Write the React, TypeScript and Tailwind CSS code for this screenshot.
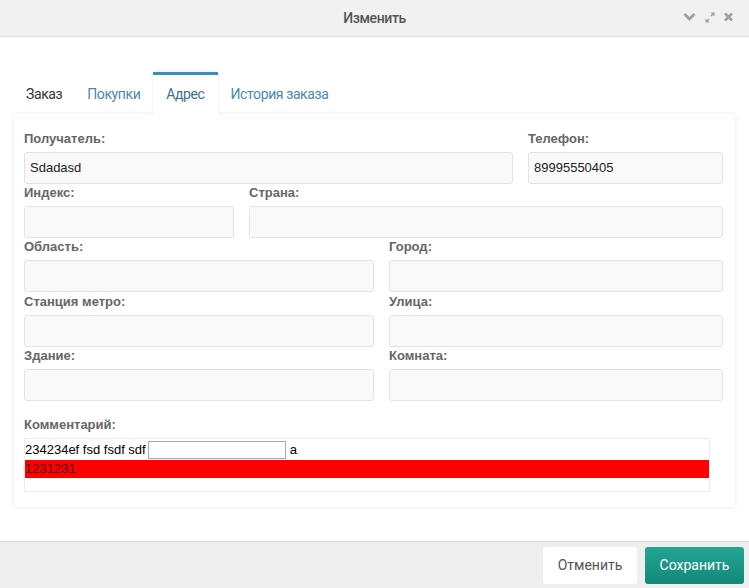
import React from 'react';

const cond = { fontFamily: '"Roboto", "Liberation Sans", sans-serif' };

interface FieldProps {
  label: string;
  value?: string;
  className?: string;
}

const Field: React.FC<FieldProps> = ({ label, value, className }) => (
  <div className={className}>
    <div className="h-[18px] mb-[4px] text-[13px] leading-[18px] font-bold text-[#666]">{label}</div>
    <div className="h-[32px] rounded-[3px] border border-[#e3e3e3] bg-[#f9f9f9] px-[5px] text-[13px] leading-[30px] text-[#222]">
      {value}
    </div>
  </div>
);

const tabs = ['Заказ', 'Покупки', 'Адрес', 'История заказа'];

export default function App() {
  return (
    <div className="w-[749px] h-[588px] flex flex-col bg-white overflow-hidden" style={{ fontFamily: '"Liberation Sans", Arial, sans-serif' }}>
      {/* header */}
      <div className="h-[37px] shrink-0 relative flex items-center justify-center bg-[#f1f1f1] border-b border-[#dcdcdc]">
        <span className="text-[14px] font-medium text-[#555] tracking-[-0.4px]" style={cond}>Изменить</span>
        <div className="absolute right-[16px] top-0 h-full flex items-center gap-[9px] text-[#a0a0a0] pb-[2px]">
          <svg width="13" height="10" viewBox="0 0 13 10">
            <path d="M1.5 2 L6.5 7 L11.5 2" fill="none" stroke="currentColor" strokeWidth="2.8" />
          </svg>
          <svg width="10" height="11" viewBox="0 0 10 11">
            <path d="M5.5 0.5 H9.5 V4.5 Z M0.5 6.5 V10.5 H4.5 Z" fill="currentColor" />
            <path d="M8.5 1.5 L6 4 M1.5 9.5 L4 7" stroke="currentColor" strokeWidth="1.5" />
          </svg>
          <svg width="9" height="10" viewBox="0 0 9 10">
            <path d="M1 1.5 L8 8.5 M8 1.5 L1 8.5" stroke="currentColor" strokeWidth="2.6" />
          </svg>
        </div>
      </div>

      {/* body */}
      <div className="flex-1 px-[14px] pt-[35px]">
        <div className="flex h-[42px] items-end gap-[1px]" style={cond}>
          {tabs.map((t) => {
            const active = t === 'Адрес';
            return (
              <div
                key={t}
                className={
                  active
                    ? 'h-[42px] px-[13px] pt-[9px] bg-white border-t-[3px] border-[#3c8dbc] text-[#3a6f8f] text-[14px] tracking-[-0.4px] shadow-[0_-1px_3px_rgba(0,0,0,0.08)] relative z-10'
                    : 'h-[42px] px-[12px] pt-[12px] text-[14px] tracking-[-0.4px] ' + (t === 'Заказ' ? 'text-[#333]' : 'text-[#4a87b0]')
                }
              >
                {t}
              </div>
            );
          })}
        </div>
        <div className="bg-white shadow-[0_0_4px_rgba(0,0,0,0.1)] px-[10px] pt-[16px] pb-[15px]">
          <div className="flex gap-[15px]">
            <Field label="Получатель:" value="Sdadasd" className="w-[489px]" />
            <Field label="Телефон:" value="89995550405" className="w-[195px]" />
          </div>
          <div className="flex gap-[15px]">
            <Field label="Индекс:" className="w-[210px]" />
            <Field label="Страна:" className="w-[474px]" />
          </div>
          <div className="flex gap-[15px]">
            <Field label="Область:" className="w-[350px]" />
            <Field label="Город:" className="w-[334px]" />
          </div>
          <div className="flex gap-[15px] mt-[1px]">
            <Field label="Станция метро:" className="w-[350px]" />
            <Field label="Улица:" className="w-[334px]" />
          </div>
          <div className="flex gap-[15px]">
            <Field label="Здание:" className="w-[350px]" />
            <Field label="Комната:" className="w-[334px]" />
          </div>
          <div className="mt-[15px] h-[18px] mb-[4px] text-[13px] leading-[18px] font-bold text-[#666]">Комментарий:</div>
          <div className="w-[686px] h-[54px] border border-[#ececec] text-[13px] text-black">
            <div className="flex items-center h-[21px]">
              <span>234234ef fsd fsdf sdf</span>
              <span className="inline-block ml-[2px] w-[138px] h-[18px] border border-[#a9a9a9] bg-white"></span>
              <span className="ml-[4px]">a</span>
            </div>
            <div className="h-[18px] bg-[#ff0000] text-[#4a0000] text-[13px] leading-[18px]">1231231</div>
          </div>
        </div>
      </div>

      {/* footer */}
      <div className="h-[47px] shrink-0 flex items-center justify-end gap-[8px] pr-[5px] bg-[#eeeeee] border-t border-[#d9d9d9]" style={cond}>
        <button className="w-[94px] h-[37px] rounded-[3px] bg-white text-[14px] text-[#555]">Отменить</button>
        <button className="w-[99px] h-[37px] rounded-[3px] bg-gradient-to-b from-[#24a592] to-[#12887a] text-[14px] text-white">Сохранить</button>
      </div>
    </div>
  );
}
